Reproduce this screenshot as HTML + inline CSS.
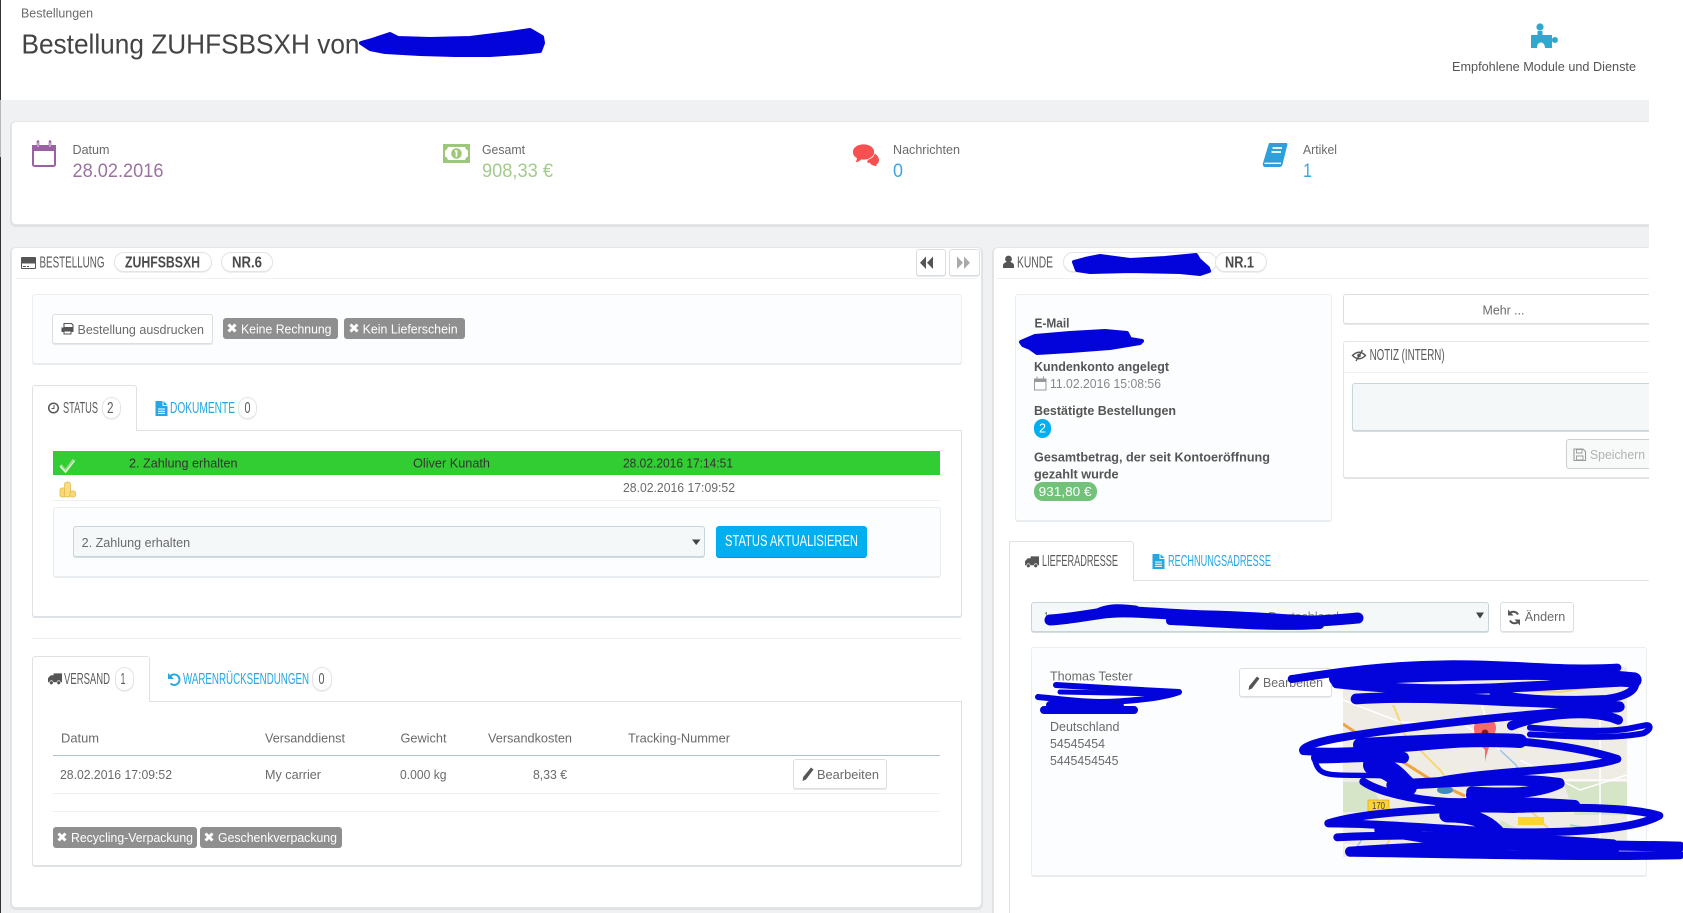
<!DOCTYPE html>
<html><head><meta charset="utf-8"><title>Bestellung</title>
<style>
html,body{margin:0;padding:0;background:#fff;width:1683px;height:913px;overflow:hidden}
#clip{position:absolute;left:0;top:0;width:1649px;height:913px;overflow:hidden}
.b{position:absolute;box-sizing:border-box}
.card{background:#fff;border:1px solid #e4e6e8;border-radius:5px;box-shadow:0 1px 0 1px #dfe2e4}
.well{background:#fcfdfe;border:1px solid #eaeef0;border-radius:3px;box-shadow:0 1px 0 #e8ebed}
.btn{background:#fff;border:1px solid #dcdfe1;border-radius:3px;box-shadow:0 1px 0 #e6e8ea}
.pill{background:#fff;border:1px solid #e2e4e6;border-radius:11px;box-shadow:0 1px 0 #eee}
.lab{background:#8f8f8f;border-radius:3px}
.inp{background:#f5f8f9;border:1px solid #c7d6db;border-radius:3px;box-shadow:0 1px 0 #d5dde0}
.ln{background:#eef0f2;height:1px}
svg{position:absolute;left:0;top:0}
text{font-family:"Liberation Sans",sans-serif;font-size:12.5px;fill:#6a6a6a}
.c{font-size:15.5px;fill:#5a5a5a}
.bd{font-weight:bold;font-size:13px;fill:#555}
.w{fill:#fff;font-size:13px}
</style></head><body>
<div id="clip">
<div class="b" style="left:0;top:0;width:1649px;height:100px;background:#fff"></div>
<div class="b" style="left:1px;top:100px;width:1648px;height:813px;background:#eff1f2"></div>

<div class="b card" style="left:11px;top:121px;width:1700px;height:104px"></div>
<div class="b card" style="left:11px;top:247px;width:971px;height:661px"></div>
<div class="b card" style="left:993px;top:247px;width:700px;height:700px"></div>

<div class="b ln" style="left:16px;top:278px;width:961px"></div>
<div class="b ln" style="left:997px;top:278px;width:660px"></div>

<div class="b pill" style="left:114px;top:252px;width:98px;height:20px"></div>
<div class="b pill" style="left:221px;top:252px;width:52px;height:20px"></div>
<div class="b btn" style="left:916px;top:249px;width:30px;height:27px"></div>
<div class="b btn" style="left:949px;top:249px;width:31px;height:27px"></div>
<div class="b pill" style="left:1063px;top:252px;width:154px;height:20px"></div>
<div class="b pill" style="left:1215px;top:252px;width:52px;height:20px"></div>

<!-- print well -->
<div class="b well" style="left:32px;top:294px;width:930px;height:70px"></div>
<div class="b btn" style="left:52px;top:314px;width:161px;height:30px"></div>
<div class="b lab" style="left:223px;top:318px;width:115px;height:21px"></div>
<div class="b lab" style="left:344px;top:318px;width:121px;height:21px"></div>

<!-- status tabs -->
<div class="b card" style="left:32px;top:430px;width:930px;height:187px;border-radius:0 0 3px 3px;border-color:#dfe2e4;box-shadow:0 1px 0 #dfe2e4"></div>
<div class="b" style="left:32px;top:385px;width:105px;height:46px;background:#fff;border:1px solid #dfe2e4;border-bottom:0;border-radius:3px 3px 0 0"></div>
<div class="b pill" style="left:102px;top:397px;width:19px;height:22px"></div>
<div class="b pill" style="left:238px;top:397px;width:19px;height:22px"></div>
<div class="b" style="left:53px;top:451px;width:887px;height:24px;background:#32cd32"></div>
<div class="b ln" style="left:53px;top:500px;width:887px"></div>
<div class="b well" style="left:53px;top:507px;width:888px;height:70px"></div>
<div class="b inp" style="left:73px;top:526px;width:632px;height:31px"></div>
<div class="b" style="left:716px;top:526px;width:151px;height:31px;background:#00aff0;border-radius:3px;box-shadow:0 1px 0 #0a97cc"></div>

<div class="b ln" style="left:32px;top:638px;width:930px"></div>

<!-- versand tabs -->
<div class="b card" style="left:32px;top:701px;width:930px;height:165px;border-radius:0 0 3px 3px;border-color:#dfe2e4;box-shadow:0 1px 0 #dfe2e4"></div>
<div class="b" style="left:32px;top:656px;width:118px;height:46px;background:#fff;border:1px solid #dfe2e4;border-bottom:0;border-radius:3px 3px 0 0"></div>
<div class="b pill" style="left:115px;top:667px;width:19px;height:24px"></div>
<div class="b pill" style="left:312px;top:667px;width:20px;height:24px"></div>
<div class="b" style="left:53px;top:755px;width:887px;height:1px;background:#a9c4d0"></div>
<div class="b btn" style="left:793px;top:759px;width:94px;height:30px"></div>
<div class="b ln" style="left:53px;top:793px;width:887px"></div>
<div class="b ln" style="left:53px;top:811px;width:887px"></div>
<div class="b lab" style="left:53px;top:827px;width:144px;height:21px"></div>
<div class="b lab" style="left:200px;top:827px;width:142px;height:21px"></div>

<!-- customer -->
<div class="b well" style="left:1015px;top:294px;width:317px;height:227px"></div>
<div class="b" style="left:1034px;top:419px;width:17px;height:19px;background:#00aff0;border-radius:9px"></div>
<div class="b" style="left:1034px;top:482px;width:63px;height:19px;background:#72c279;border-radius:9px"></div>
<div class="b btn" style="left:1343px;top:294px;width:400px;height:30px"></div>
<div class="b card" style="left:1343px;top:341px;width:400px;height:137px;border-radius:3px;border-color:#e4e6e8;box-shadow:0 1px 0 #dfe2e4"></div>
<div class="b ln" style="left:1344px;top:372px;width:330px"></div>
<div class="b inp" style="left:1352px;top:383px;width:380px;height:48px"></div>
<div class="b" style="left:1566px;top:439px;width:90px;height:30px;background:#f8f9f9;border:1px solid #ccd0d2;border-radius:3px"></div>

<!-- address tabs -->
<div class="b" style="left:1009px;top:580px;width:700px;height:1px;background:#dfe2e4"></div>
<div class="b" style="left:1009px;top:541px;width:126px;height:400px;border-left:1px solid #dfe2e4"></div>
<div class="b" style="left:1009px;top:541px;width:125px;height:40px;background:#fff;border:1px solid #dfe2e4;border-bottom:0;border-radius:3px 3px 0 0"></div>
<div class="b inp" style="left:1031px;top:602px;width:458px;height:30px"></div>
<div class="b btn" style="left:1500px;top:602px;width:74px;height:30px"></div>
<div class="b well" style="left:1031px;top:647px;width:616px;height:229px"></div>
<div class="b btn" style="left:1239px;top:668px;width:93px;height:29px"></div>

<svg width="1649" height="913" viewBox="0 0 1649 913" xmlns="http://www.w3.org/2000/svg">
<defs>
<symbol id="x" viewBox="0 0 10 10" overflow="visible"><path d="M1.5 1.5L8.5 8.5M8.5 1.5L1.5 8.5" stroke="#fff" stroke-width="3" fill="none"/></symbol>
<symbol id="truck" viewBox="0 0 15 12" overflow="visible"><path d="M6 0H15V9.5H13.5a2 2 0 0 0-4 0H5.6a2 2 0 0 0-4 0H0V5L3 2H6Z" fill="#555"/><circle cx="3.6" cy="10" r="1.7" fill="#555"/><circle cx="11.5" cy="10" r="1.7" fill="#555"/></symbol>
<symbol id="file" viewBox="0 0 12 15" overflow="visible"><path d="M0 0H7V5H12V15H0Z" fill="#25a7e3"/><path d="M8 0L12 4H8Z" fill="#25a7e3"/><path d="M2.5 8H9.5M2.5 10.2H9.5M2.5 12.4H9.5" stroke="#fff" stroke-width="1"/></symbol>
<symbol id="pencil" viewBox="0 0 12 14" overflow="visible"><path d="M9 .5L11.500 2.500L4 12.500L.5 14L1.200 10Z" fill="#555"/></symbol>
</defs>

<!-- left edge -->
<path d="M0.5 0V100" stroke="#333"/><path d="M0.5 100V157" stroke="#b5b7b8"/><path d="M0.5 157V913" stroke="#333"/>

<!-- stat icons -->
<g fill="none" stroke="#9b5fa3" stroke-width="2"><rect x="33" y="146" width="22" height="20" rx="1.500"/></g>
<path d="M32 145H56V151H32Z" fill="#9b5fa3"/><path d="M38 141.500V148M50 141.500V148" stroke="#9b5fa3" stroke-width="2.600" stroke-linecap="round"/>
<path d="M38 142.500V147M50 142.500V147" stroke="#fff" stroke-width=".8"/>

<rect x="443" y="144" width="27" height="19" fill="#9dc879"/>
<path d="M448 147H465Q466 150 468 150.500V156.500Q466 157 465 160H448Q447 157 445 156.500V150.500Q447 150 448 147Z" fill="#fff"/>
<circle cx="456.500" cy="153.500" r="5.300" fill="#9dc879"/><path d="M456.500 150.500V156.800M455 151.500L456.500 150.500" stroke="#fff" stroke-width="1.700" fill="none"/>

<path d="M871 152c5 1 8 5 8 8 0 3-2 4-3 5l1 1c-3 0-6-1-7-3l-3-.5z" fill="#f85050"/>
<path d="M863.500 144c6.500 0 11 3.600 11 8 0 4.500-4.500 8-11 8l-2-.2c-1.500 1.700-4 2.800-7 3 1.200-1.300 2-2.700 2-4.500-2.600-1.500-4-3.800-4-6.300 0-4.400 4.500-8 11-8z" fill="#f85050" stroke="#fff" stroke-width=".8"/>

<path d="M1269 143H1286.500C1287.500 143 1287.500 144 1287.300 145L1282.500 164.500C1282 166 1281 167 1279 167H1265.500C1263 167 1262.500 165 1263 163Z" fill="#2d9fdb"/>
<path d="M1264.500 163.300H1281" stroke="#fff" stroke-width="1.300"/>
<path d="M1272.500 148H1282M1271.500 152H1281" stroke="#fff" stroke-width="1.800"/>

<path d="M1531 35H1537.500V31H1542.500V35H1552V48H1545C1545 44 1542.500 42.500 1541 42.500 1539 42.500 1537 44 1537 48H1531Z" fill="#2fa8cf"/>
<circle cx="1540" cy="27" r="3.600" fill="#2fa8cf"/><circle cx="1555" cy="40" r="3" fill="#2fa8cf"/><path d="M1550 38.500H1555V41.500H1550Z" fill="#2fa8cf"/>

<!-- header texts -->
<text x="21" y="17.500" textLength="72" lengthAdjust="spacingAndGlyphs">Bestellungen</text>
<text x="21.500" y="53.500" textLength="338" lengthAdjust="spacingAndGlyphs" style="font-size:28px;fill:#444">Bestellung ZUHFSBSXH von</text>
<text x="1452" y="71" textLength="184" lengthAdjust="spacingAndGlyphs" style="fill:#555">Empfohlene Module und Dienste</text>

<text x="72.500" y="154" textLength="37" lengthAdjust="spacingAndGlyphs">Datum</text>
<text x="72.500" y="177" textLength="91" lengthAdjust="spacingAndGlyphs" style="font-size:19.500px;fill:#9a72a1">28.02.2016</text>
<text x="482" y="154" textLength="43" lengthAdjust="spacingAndGlyphs">Gesamt</text>
<text x="482" y="177" textLength="71" lengthAdjust="spacingAndGlyphs" style="font-size:19.500px;fill:#a4ca8c">908,33 €</text>
<text x="893" y="154" textLength="67" lengthAdjust="spacingAndGlyphs">Nachrichten</text>
<text x="893" y="177" textLength="10" lengthAdjust="spacingAndGlyphs" style="font-size:19.500px;fill:#3ea6dd">0</text>
<text x="1303" y="154" textLength="34" lengthAdjust="spacingAndGlyphs">Artikel</text>
<text x="1303" y="177" textLength="9" lengthAdjust="spacingAndGlyphs" style="font-size:19.500px;fill:#3ea6dd">1</text>

<!-- panel head left -->
<rect x="21" y="257" width="15" height="12" rx="1" fill="#555"/><path d="M22 263.500H35V268H22Z" fill="#fff"/><path d="M23 266.500H26M27 266.500H29" stroke="#555"/>
<text class="c" x="39.500" y="267.300" textLength="65" lengthAdjust="spacingAndGlyphs">BESTELLUNG</text>
<text class="c" x="125" y="267.300" textLength="75" lengthAdjust="spacingAndGlyphs" style="font-weight:bold;font-size:16px;fill:#4a4a4a">ZUHFSBSXH</text>
<text class="c" x="232" y="267.300" textLength="30" lengthAdjust="spacingAndGlyphs" style="font-weight:bold;font-size:16px;fill:#4a4a4a">NR.6</text>
<path d="M926 256.500V269L920 262.800ZM933 256.500V269L927 262.800Z" fill="#555"/>
<path d="M957 256.500V269L963 262.800ZM964 256.500V269L970 262.800Z" fill="#aaa"/>

<!-- print btn -->
<path d="M64 323.500H71.500L73 325V327.500H64Z" fill="#fff" stroke="#555" stroke-width="1.100"/><path d="M61.500 327.500H73.500V332H71.500V330.500H63.500V332H61.500Z" fill="#555"/><path d="M64 331H71V334H64Z" fill="#fff" stroke="#555" stroke-width="1"/>
<text x="77.500" y="334" textLength="126.500" lengthAdjust="spacingAndGlyphs" style="font-size:13px">Bestellung ausdrucken</text>
<use href="#x" x="227" y="323" width="10" height="10"/>
<text class="w" x="241" y="333.500" textLength="90.500" lengthAdjust="spacingAndGlyphs">Keine Rechnung</text>
<use href="#x" x="349" y="323" width="10" height="10"/>
<text class="w" x="362.600" y="333.500" textLength="95" lengthAdjust="spacingAndGlyphs">Kein Lieferschein</text>

<!-- status tab heads -->
<circle cx="53.500" cy="408" r="4.800" fill="none" stroke="#555" stroke-width="1.500"/><path d="M54 405V408.500H51.500" fill="none" stroke="#555"/>
<text class="c" x="63" y="413" textLength="35" lengthAdjust="spacingAndGlyphs">STATUS</text>
<text class="c" x="107" y="413" textLength="6.500" lengthAdjust="spacingAndGlyphs">2</text>
<use href="#file" x="155.500" y="401" width="12" height="15"/>
<text class="c" x="170" y="413" textLength="65" lengthAdjust="spacingAndGlyphs" style="fill:#25a7e3">DOKUMENTE</text>
<text class="c" x="244.500" y="413" textLength="6" lengthAdjust="spacingAndGlyphs">0</text>

<!-- status rows -->
<path d="M60.500 465.500L65.500 471L74 460" fill="none" stroke="#e2f5dc" stroke-width="3"/><path d="M61.500 465.500L65.500 469.800L73.500 460" fill="none" stroke="#8ed47e" stroke-width="1.200"/>
<text x="129" y="467.300" textLength="108.500" lengthAdjust="spacingAndGlyphs" style="fill:#333">2. Zahlung erhalten</text>
<text x="413" y="467.300" textLength="77" lengthAdjust="spacingAndGlyphs" style="fill:#333">Oliver Kunath</text>
<text x="623" y="467.300" textLength="110" lengthAdjust="spacingAndGlyphs" style="fill:#333">28.02.2016 17:14:51</text>
<rect x="60" y="488" width="6" height="9" rx="2" fill="#f7d873" stroke="#e2b548" stroke-width=".7"/>
<rect x="64.500" y="482" width="6" height="15" rx="2.500" fill="#f9dd80" stroke="#e2b548" stroke-width=".7"/>
<rect x="70" y="491" width="5.500" height="6" rx="2" fill="#f7d873" stroke="#e2b548" stroke-width=".7"/>
<text x="623" y="492" textLength="112" lengthAdjust="spacingAndGlyphs">28.02.2016 17:09:52</text>

<text x="81.600" y="547" textLength="108.500" lengthAdjust="spacingAndGlyphs">2. Zahlung erhalten</text>
<path d="M692 539.500H700.500L696.200 545Z" fill="#444"/>
<text class="c" x="725" y="546" textLength="133" lengthAdjust="spacingAndGlyphs" style="fill:#fff">STATUS AKTUALISIEREN</text>

<!-- versand tabs -->
<use href="#truck" x="48" y="673" width="14" height="12"/>
<text class="c" x="64" y="684" textLength="46" lengthAdjust="spacingAndGlyphs">VERSAND</text>
<text class="c" x="120.500" y="684" textLength="5" lengthAdjust="spacingAndGlyphs">1</text>
<path d="M170 676.500A5.300 5.300 0 1 1 170.500 683.500" fill="none" stroke="#25a7e3" stroke-width="1.900"/><path d="M168 673V679H174Z" fill="#25a7e3"/>
<text class="c" x="183" y="684" textLength="126" lengthAdjust="spacingAndGlyphs" style="fill:#25a7e3">WARENRÜCKSENDUNGEN</text>
<text class="c" x="318.500" y="684" textLength="6" lengthAdjust="spacingAndGlyphs">0</text>

<text x="61" y="742.700" textLength="38" lengthAdjust="spacingAndGlyphs">Datum</text>
<text x="265" y="742.700" textLength="80" lengthAdjust="spacingAndGlyphs">Versanddienst</text>
<text x="400.500" y="742.700" textLength="46" lengthAdjust="spacingAndGlyphs">Gewicht</text>
<text x="488" y="742.700" textLength="84" lengthAdjust="spacingAndGlyphs">Versandkosten</text>
<text x="628" y="742.700" textLength="102" lengthAdjust="spacingAndGlyphs">Tracking-Nummer</text>
<text x="60" y="779" textLength="112" lengthAdjust="spacingAndGlyphs">28.02.2016 17:09:52</text>
<text x="265" y="779" textLength="56" lengthAdjust="spacingAndGlyphs">My carrier</text>
<text x="400" y="779" textLength="46.500" lengthAdjust="spacingAndGlyphs">0.000 kg</text>
<text x="533" y="779" textLength="34" lengthAdjust="spacingAndGlyphs">8,33 €</text>
<use href="#pencil" x="802" y="767" width="12" height="14"/>
<text x="817" y="779" textLength="62" lengthAdjust="spacingAndGlyphs" style="font-size:13px">Bearbeiten</text>
<use href="#x" x="57" y="832" width="10" height="10"/>
<text class="w" x="71" y="842" textLength="122" lengthAdjust="spacingAndGlyphs">Recycling-Verpackung</text>
<use href="#x" x="204" y="832" width="10" height="10"/>
<text class="w" x="218" y="842" textLength="119" lengthAdjust="spacingAndGlyphs">Geschenkverpackung</text>

<!-- customer head -->
<circle cx="1008.500" cy="259" r="3.400" fill="#555"/><path d="M1003 268V265.500C1003 263.500 1005 262.500 1006.500 262H1010.500C1012 262.500 1014 263.500 1014 265.500V268Z" fill="#555"/>
<text class="c" x="1017" y="267.300" textLength="36" lengthAdjust="spacingAndGlyphs">KUNDE</text>
<text class="c" x="1225" y="267.300" textLength="29" lengthAdjust="spacingAndGlyphs" style="font-weight:bold;font-size:16px;fill:#4a4a4a">NR.1</text>

<text class="bd" x="1034.500" y="327.300" textLength="35" lengthAdjust="spacingAndGlyphs">E-Mail</text>
<text class="bd" x="1034" y="371" textLength="135" lengthAdjust="spacingAndGlyphs">Kundenkonto angelegt</text>
<rect x="1034.500" y="379" width="11.500" height="11" fill="none" stroke="#999"/><path d="M1034.500 379H1046V381.500H1034.500ZM1037 376.500V379M1043.500 376.500V379" stroke="#999" fill="#999"/>
<text x="1050" y="388" textLength="111" lengthAdjust="spacingAndGlyphs" style="fill:#888">11.02.2016 15:08:56</text>
<text class="bd" x="1034" y="415" textLength="142" lengthAdjust="spacingAndGlyphs">Bestätigte Bestellungen</text>
<text class="w" x="1039" y="432.700" textLength="7" lengthAdjust="spacingAndGlyphs">2</text>
<text class="bd" x="1034" y="461.700" textLength="236" lengthAdjust="spacingAndGlyphs">Gesamtbetrag, der seit Kontoeröffnung</text>
<text class="bd" x="1034" y="478.300" textLength="84.600" lengthAdjust="spacingAndGlyphs">gezahlt wurde</text>
<text class="w" x="1038.600" y="496" textLength="53" lengthAdjust="spacingAndGlyphs">931,80 €</text>

<text x="1482.500" y="314.500" textLength="42" lengthAdjust="spacingAndGlyphs" style="font-size:13px">Mehr ...</text>
<path d="M1352.500 355.500Q1359 349 1365.500 355.500Q1359 362 1352.500 355.500Z" fill="none" stroke="#555" stroke-width="1.400"/><circle cx="1359" cy="355.500" r="1.800" fill="#555"/><path d="M1356 361L1362.500 350" stroke="#555" stroke-width="1.300"/>
<text class="c" x="1369.600" y="360" textLength="75" lengthAdjust="spacingAndGlyphs">NOTIZ (INTERN)</text>
<path d="M1574 449H1583L1585.500 451.500V460.500H1574Z" fill="none" stroke="#999" stroke-width="1.100"/><path d="M1576.500 449.500H1582V453H1576.500ZM1576.500 456H1583V460H1576.500Z" fill="none" stroke="#999" stroke-width=".9"/>
<text x="1590" y="459" textLength="55" lengthAdjust="spacingAndGlyphs" style="font-size:13px;fill:#b2b2b2">Speichern</text>

<!-- address tabs -->
<use href="#truck" x="1025" y="556" width="14" height="12"/>
<text class="c" x="1042" y="566" textLength="76" lengthAdjust="spacingAndGlyphs">LIEFERADRESSE</text>
<use href="#file" x="1152.500" y="554" width="12" height="15"/>
<text class="c" x="1168" y="566" textLength="103" lengthAdjust="spacingAndGlyphs" style="fill:#25a7e3">RECHNUNGSADRESSE</text>
<path d="M1476 612.500H1484L1480 618.500Z" fill="#444"/>
<text x="1044" y="621" textLength="7" lengthAdjust="spacingAndGlyphs">1.</text>
<text x="1268" y="621" style="fill:#888" textLength="71" lengthAdjust="spacingAndGlyphs">Deutschland</text>
<path d="M1518 614.500A5.200 5.200 0 0 0 1509.500 613.500M1510 620.500A5.200 5.200 0 0 0 1518.500 621.500" fill="none" stroke="#555" stroke-width="2"/><path d="M1508 609.500V615.500H1513.500ZM1520 625.500V619.500H1514.500Z" fill="#555"/>
<text x="1524.700" y="621" textLength="40.600" lengthAdjust="spacingAndGlyphs" style="font-size:13px">Ändern</text>

<text x="1050" y="680.300" textLength="82.700" lengthAdjust="spacingAndGlyphs">Thomas Tester</text>
<text x="1050" y="731" textLength="69.400" lengthAdjust="spacingAndGlyphs">Deutschland</text>
<text x="1050" y="748" textLength="55" lengthAdjust="spacingAndGlyphs">54545454</text>
<text x="1050" y="765" textLength="68.500" lengthAdjust="spacingAndGlyphs">5445454545</text>
<use href="#pencil" x="1248" y="676" width="12" height="14"/>
<text x="1263" y="687" textLength="60" lengthAdjust="spacingAndGlyphs" style="font-size:13px">Bearbeiten</text>

<!-- map -->
<svg x="1343" y="667" width="284" height="190" viewBox="1343 667 284 190">
<rect x="1343" y="667" width="284" height="190" fill="#efece5"/>
<path d="M1343 782H1370L1385 812H1343ZM1563 782H1627V815H1575ZM1500 820L1560 850H1500Z" fill="#d6e4c8"/>
<path d="M1343 724L1361 736M1403 762L1433 781L1465 796" fill="none" stroke="#f0a43c" stroke-width="3"/>
<path d="M1393 705Q1400 720 1405 735L1440 770L1452 785M1500 690L1560 692L1600 686M1530 810L1570 850M1395 830L1380 857M1520 782L1530 800" fill="none" stroke="#f5d775" stroke-width="2"/>
<path d="M1343 700L1400 722L1465 725L1500 750M1520 760L1580 790L1627 775M1600 700L1600 860M1430 830L1470 845M1480 700L1490 730M1560 780H1627M1370 770L1420 790M1345 845L1400 850" fill="none" stroke="#fff" stroke-width="1.500"/>
<path d="M1500 750L1516 765L1530 790M1570 825L1600 830M1350 857L1365 835" fill="none" stroke="#9dc3e8" stroke-width="1.500"/>
<rect x="1368" y="800" width="21" height="11" fill="#fbd333" stroke="#d9aa22" stroke-width=".7"/>
<text x="1372" y="809" textLength="13" lengthAdjust="spacingAndGlyphs" style="font-size:10px;fill:#444">170</text>
<rect x="1518" y="817" width="26" height="8" fill="#fbd333"/>
<ellipse cx="1445" cy="790" rx="8" ry="4" fill="#3e88c8"/>
<path d="M1485 750C1476 740 1474 734 1474 728A11 11 0 0 1 1496 728C1496 734 1488 745 1485 762Z" fill="#f66a6a"/>
<circle cx="1485" cy="733" r="3.500" fill="#7a2020"/>
</svg>
</svg>
</div>
<div style="position:absolute;left:1649px;top:0;width:34px;height:913px;background:#fff"></div>

<!-- scribbles over everything -->
<svg width="1683" height="913" viewBox="0 0 1683 913" xmlns="http://www.w3.org/2000/svg" style="position:absolute;left:0;top:0">
<g fill="#0303dc" stroke="#0303dc" stroke-width="4" stroke-linejoin="round">
<path d="M361 43L372 40L390 34L398 38L430 39L470 38L510 33L530 30L542 37L543 43L540 51L520 53L490 55L455 55L420 54L385 52L370 49Z"/>
<path d="M1074 262L1085 259L1100 256L1130 260L1165 258L1196 255L1199 260L1208 268L1209 271L1200 274L1180 272L1130 271L1090 272L1077 270Z"/>
<path d="M1021 342L1035 336L1070 333L1105 331L1127 333L1130 339L1142 341L1140 343L1110 348L1070 351L1037 353L1030 348L1023 345Z"/>
</g>
<g fill="none" stroke="#0303dc" stroke-linecap="round" stroke-linejoin="round">
<path d="M1050 620C1080 618 1100 612 1118 612C1140 611 1170 615 1210 616C1255 617 1285 620 1310 621C1330 621 1345 619 1358 618" stroke-width="11"/>
<path d="M1100 613C1110 609 1120 609 1135 611" stroke-width="11"/>
<path d="M1170 621C1220 623 1270 628 1320 625" stroke-width="8"/>
<path d="M1056 685L1123 689L1179 692C1160 699 1120 702 1100 702C1080 702 1060 699 1038 697" stroke-width="6"/>
<path d="M1060 692L1160 694" stroke-width="5"/>
<path d="M1044 710H1134M1050 705L1120 706" stroke-width="8"/>
</g>
<g transform="translate(1280 655) scale(.3333)" fill="none" stroke="#0303dc" stroke-linecap="round" stroke-linejoin="round">
<path d="M35 72C150 55 300 30 500 28C700 26 850 48 1012 38" stroke-width="24"/>
<path d="M170 70C350 60 600 50 800 52L1062 75" stroke-width="46"/>
<path d="M170 85C350 105 500 105 640 100L1060 78" stroke-width="30"/>
<path d="M1066 85C1065 110 1030 125 980 132C800 140 700 130 640 112" stroke-width="24"/>
<path d="M228 132C400 120 600 135 800 142L1018 155" stroke-width="32"/>
<path d="M1015 160C800 170 400 210 170 250C90 265 65 280 70 288C250 300 500 260 700 258C850 270 950 292 1012 312C900 350 600 345 450 385" stroke-width="24"/>
<path d="M240 270C400 262 600 250 720 258" stroke-width="42"/>
<path d="M105 318C120 370 150 358 300 362" stroke-width="16"/>
<path d="M110 308C200 308 300 298 370 308" stroke-width="34"/>
<path d="M280 330C350 350 350 370 380 395" stroke-width="62"/>
<path d="M250 380C300 415 450 450 600 440" stroke-width="24"/>
<path d="M335 390C500 382 700 365 838 385C760 422 650 415 575 410" stroke-width="32"/>
<path d="M580 420L710 420" stroke-width="44"/>
<path d="M695 212C800 170 950 165 1015 195" stroke-width="28"/>
<path d="M750 238C900 245 1000 252 1090 235C1120 220 1110 205 1090 212C1040 222 1000 238 750 218" stroke-width="18"/>
<path d="M145 505C250 472 500 456 700 462C900 456 1050 456 1138 482C1080 514 950 534 700 532C500 524 300 505 145 505" stroke-width="24"/>
<path d="M480 450C600 438 750 440 885 450" stroke-width="30"/>
<path d="M500 480C580 480 620 500 650 530" stroke-width="44"/>
<path d="M172 547C400 535 700 545 1000 565" stroke-width="24"/>
<path d="M210 590C500 568 900 568 1200 575" stroke-width="30"/>
<path d="M210 592C600 598 900 606 1200 600" stroke-width="26"/>
<path d="M300 525C400 540 500 565 700 565" stroke-width="34"/>
<path d="M500 560L1000 585" stroke-width="34"/>
</g>
</svg>
</body></html>
